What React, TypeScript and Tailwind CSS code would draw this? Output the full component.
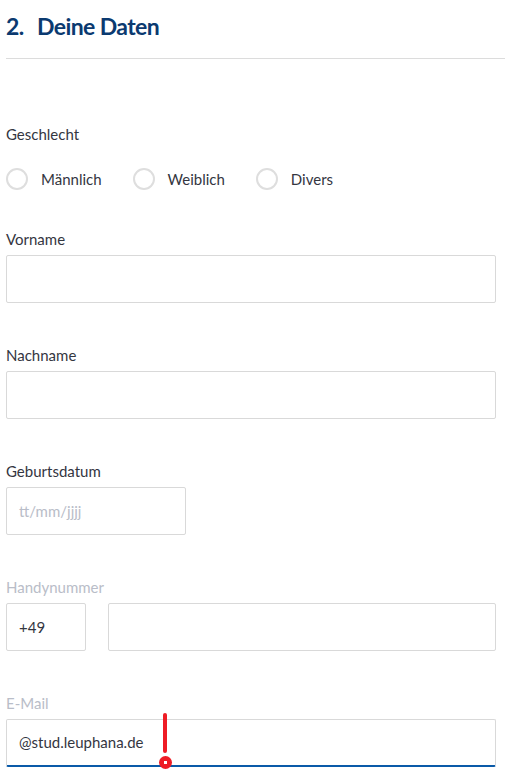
import * as React from "react";

const font = { fontFamily: "Lato, 'Open Sans', sans-serif" };

function Label({ children, muted }: { children: React.ReactNode; muted?: boolean }) {
  return (
    <div className={`h-6 text-[15px] leading-6 ${muted ? "text-[#b9bdc8]" : "text-[#34363f]"}`}>
      {children}
    </div>
  );
}

function Field({ className = "", children }: { className?: string; children?: React.ReactNode }) {
  return (
    <div
      className={`flex h-12 items-center rounded-[2px] border border-[#d9d9d9] bg-white px-3 text-[15px] text-[#34363f] ${className}`}
    >
      {children}
    </div>
  );
}

function Radio({ label }: { label: string }) {
  return (
    <div className="flex items-center gap-[13px]">
      <span className="h-[22px] w-[22px] rounded-full border-2 border-[#dedede] bg-white" />
      <span className="text-[15px] text-[#34363f]">{label}</span>
    </div>
  );
}

export default function App() {
  return (
    <div className="min-h-[781px] w-[511px] overflow-hidden bg-white" style={font}>
      <div className="pl-[6px] pr-[6px] pt-[10px]">
        <h2 className="flex h-8 items-center text-[23px] font-bold leading-8 tracking-[-0.6px] text-[#0b3a70]">
          <span className="w-[31px]">2.</span>
          <span>Deine Daten</span>
        </h2>
        <div className="mt-4 h-px w-[499px] bg-[#dcdcdc]" />

        <div className="pr-[9px]">
          <div className="mt-[63px]">
            <Label>Geschlecht</Label>
            <div className="mt-[21px] flex h-6 items-center gap-[31px]">
              <Radio label="Männlich" />
              <Radio label="Weiblich" />
              <Radio label="Divers" />
            </div>
          </div>

          <div className="mt-[36px]">
            <Label>Vorname</Label>
            <Field className="mt-[4px]" />
          </div>

          <div className="mt-[40px]">
            <Label>Nachname</Label>
            <Field className="mt-[4px]" />
          </div>

          <div className="mt-[40px]">
            <Label>Geburtsdatum</Label>
            <Field className="mt-[4px] w-[180px] text-[#b9bdc8]">tt/mm/jjjj</Field>
          </div>

          <div className="mt-[40px]">
            <Label muted>Handynummer</Label>
            <div className="mt-[4px] flex gap-[22px]">
              <Field className="w-[80px]">+49</Field>
              <Field className="flex-1" />
            </div>
          </div>

          <div className="relative mt-[40px]">
            <Label muted>E-Mail</Label>
            <Field className="mt-[4px] border-b-2 border-b-[#0a5aa8]">@stud.leuphana.de</Field>
            <div className="absolute left-[157px] top-[22px] h-[40px] w-[4px] rounded-full bg-[#ee1c25]" />
            <div className="absolute left-[153px] top-[65px] flex h-[13px] w-[13px] items-center justify-center rounded-full bg-[#ee1c25]">
              <div className="h-[3px] w-[3px] bg-white" />
            </div>
          </div>
        </div>
      </div>
    </div>
  );
}
